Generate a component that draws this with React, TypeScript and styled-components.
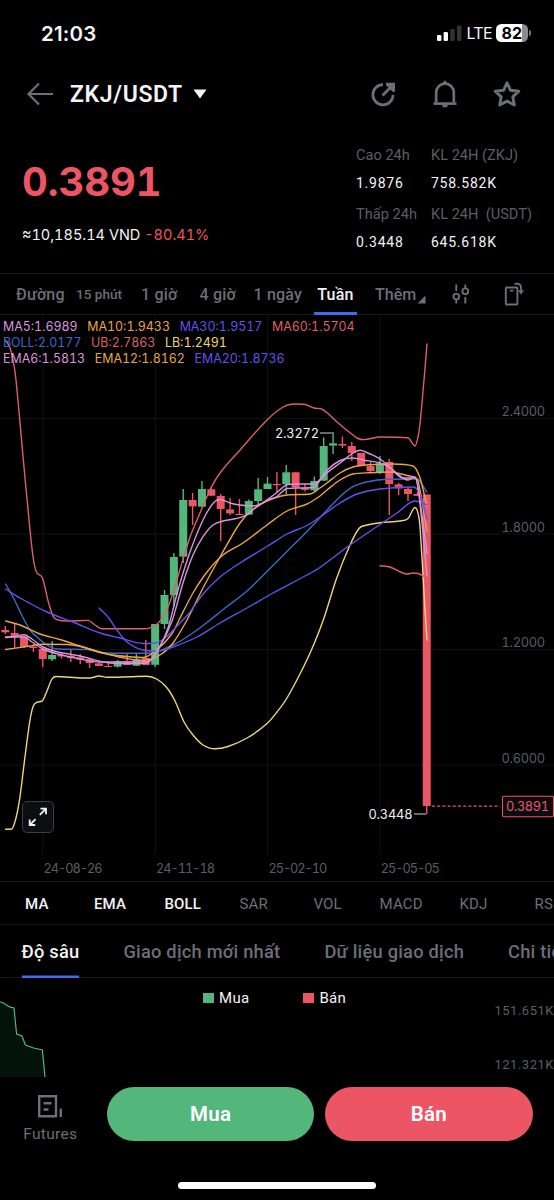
import React from "react";
import styled, { createGlobalStyle } from "styled-components";

const c = {
  muted: "#6c6e78",
  dim: "#5c5d66",
  text: "#f3f3f4",
  red: "#ec5564",
  green: "#53b77c",
  blue: "#3f6bf0",
  line: "#17181b",
  pink: "#d795dd",
  orange: "#e9a445",
  purple: "#6450ea",
  boll: "#3d68c9",
  ub: "#dc5f6b",
  lb: "#edd67a",
};

const inter = `Inter, "Noto Sans", sans-serif`;

const Global = createGlobalStyle`
  * { box-sizing: border-box; }
  body { margin: 0; background: #000; }
`;

const Screen = styled.div`
  width: 554px;
  height: 1200px;
  background: #000;
  color: ${c.text};
  font-family: Roboto, "Noto Sans", sans-serif;
  font-variant-numeric: tabular-nums;
  display: flex;
  flex-direction: column;
  overflow: hidden;
  white-space: pre;
`;

const StatusBar = styled.div`
  height: 66px;
  display: flex;
  align-items: center;
  justify-content: space-between;
  padding: 0 23px 0 41px;
  font-family: ${inter};
  font-variant-numeric: normal;
`;
const Clock = styled.span`
  font-size: 20.5px;
  font-weight: 600;
  letter-spacing: 0.2px;
`;
const StatusRight = styled.div`
  display: flex;
  align-items: center;
  gap: 5px;
`;
const Lte = styled.span`
  font-size: 16px;
  letter-spacing: -0.7px;
  width: 24px;
`;
const Battery = styled.div`
  width: 32.5px;
  height: 18px;
  border-radius: 5.5px;
  background: linear-gradient(90deg, #fff 82%, #8b8b8b 82%);
  color: #000;
  font-size: 16px;
  font-weight: 700;
  line-height: 18px;
  text-align: center;
`;
const Nub = styled.i`
  width: 2px;
  height: 6px;
  margin-left: -4px;
  border-radius: 0 3px 3px 0;
  background: #777;
`;

const Header = styled.div`
  height: 56px;
  display: flex;
  align-items: center;
  padding: 0 33px 0 26px;
`;
const Pair = styled.h1`
  margin: 0 10px 0 16px;
  font-size: 23px;
  font-weight: 600;
  letter-spacing: 0.65px;
`;
const HeaderIcons = styled.div`
  margin-left: auto;
  display: flex;
  align-items: center;
  gap: 34px;
`;

const Summary = styled.section`
  height: 151px;
  display: flex;
  justify-content: space-between;
  padding: 21px 0 0 22px;
`;
const Price = styled.div`
  margin-top: 11px;
  font: 700 40px/56px ${inter};
  font-variant-numeric: tabular-nums;
  letter-spacing: -0.1px;
  color: ${c.red};
`;
const Fiat = styled.div`
  margin-top: 15px;
  font: 400 14.5px/20px ${inter};
  font-variant-numeric: tabular-nums;
  letter-spacing: 0;
  em {
    font-style: normal;
    color: ${c.red};
  }
`;
const Stats = styled.div`
  width: 198px;
  display: grid;
  grid-template-columns: 75px 1fr;
  grid-template-rows: 26px 33px 26px 33px;
`;
const StatLabel = styled.span`
  font-size: 14.6px;
  line-height: 24px;
  color: ${c.dim};
`;
const StatValue = styled.span`
  font-size: 14px;
  line-height: 28px;
  letter-spacing: 0.75px;
`;

const Intervals = styled.nav`
  height: 42px;
  display: flex;
  align-items: center;
  border-top: 1px solid ${c.line};
  border-bottom: 1px solid ${c.line};
  padding-left: 16px;
  font-weight: 500;
`;
const Interval = styled.span<{ $w: number; $small?: boolean }>`
  flex: none;
  width: ${(p) => p.$w}px;
  font-size: ${(p) => (p.$small ? 13.6 : 16)}px;
  letter-spacing: ${(p) => (p.$small ? 0 : 0.2)}px;
  color: ${c.muted};
`;
const ActiveInterval = styled.span`
  flex: none;
  width: 43px;
  height: 41px;
  line-height: 41px;
  margin-right: 18px;
  text-align: center;
  font-size: 16px;
  letter-spacing: 0.2px;
  box-shadow: inset 0 -3px ${c.blue};
`;
const More = styled.span`
  display: flex;
  align-items: flex-end;
  gap: 1px;
  width: 77px;
  font-size: 16px;
  letter-spacing: 0px;
  color: ${c.muted};
`;

const ChartPanel = styled.section`
  position: relative;
  height: 566px;
`;
const Plot = styled.svg`
  display: block;
`;
const Legend = styled.div`
  position: absolute;
  left: 3px;
  top: 4px;
`;
const LegendRow = styled.div`
  display: flex;
  gap: 9.7px;
  font: 400 12.4px/16px ${inter};
  font-variant-numeric: tabular-nums;
  letter-spacing: 0;
`;
const LegendItem = styled.span<{ $color: string }>`
  color: ${(p) => p.$color};
`;
const Expand = styled.button`
  position: absolute;
  left: 22px;
  top: 486px;
  width: 32px;
  height: 32px;
  padding: 0;
  border: 1px solid #3c3d43;
  border-radius: 5px;
  background: #0d0e11;
  display: grid;
  place-items: center;
`;

const Indicators = styled.nav`
  height: 44px;
  display: flex;
  align-items: center;
  border-top: 1px solid ${c.line};
  border-bottom: 1px solid ${c.line};
  padding: 1px 0 0 25px;
`;
const Indicator = styled.span<{ $w: number; $on?: boolean }>`
  flex: none;
  width: ${(p) => p.$w}px;
  font-size: 15px;
  letter-spacing: 0.15px;
  font-weight: ${(p) => (p.$on ? 500 : 400)};
  color: ${(p) => (p.$on ? c.text : c.muted)};
`;
const Divider = styled.i`
  width: 1px;
  height: 22px;
  margin-right: 22.5px;
  background: #222327;
`;

const Tabs = styled.nav`
  height: 53px;
  display: flex;
  gap: 44px;
  padding-left: 21.5px;
  border-bottom: 1px solid ${c.line};
`;
const Tab = styled.span<{ $on?: boolean }>`
  flex: none;
  height: 53px;
  line-height: 53px;
  font-size: 18.3px;
  font-weight: 500;
  letter-spacing: 0.22px;
  color: ${(p) => (p.$on ? c.text : c.muted)};
  box-shadow: ${(p) => (p.$on ? `inset 0 -2.5px ${c.blue}` : "none")};
`;

const Depth = styled.section`
  height: 99px;
  display: grid;
  grid-template-columns: 200px 1fr 62px;
`;
const DepthLegend = styled.div`
  display: flex;
  gap: 54px;
  padding: 10px 0 0 3px;
`;
const DepthKey = styled.span<{ $color: string }>`
  display: flex;
  align-items: center;
  gap: 5.5px;
  height: 20px;
  font-size: 15px;
  letter-spacing: 0.3px;
  &::before {
    content: "";
    width: 10.5px;
    height: 10.5px;
    background: ${(p) => p.$color};
  }
`;
const DepthScale = styled.div`
  display: flex;
  flex-direction: column;
  gap: 33.5px;
  padding: 23px 0 0 2.5px;
  font-size: 13px;
  line-height: 20px;
  letter-spacing: 0.5px;
  color: ${c.dim};
`;

const Actions = styled.footer`
  height: 84px;
  display: flex;
  padding: 10px 21.5px 0 0;
  gap: 11px;
`;
const Futures = styled.div`
  width: 96px;
  padding: 7px 0 0 4.5px;
  display: flex;
  flex-direction: column;
  align-items: center;
  gap: 7px;
  font-size: 15.5px;
  line-height: 18px;
  letter-spacing: 0.3px;
  color: ${c.muted};
`;
const Trade = styled.button<{ $color: string }>`
  flex: 1;
  height: 54px;
  border: 0;
  border-radius: 27px;
  background: ${(p) => p.$color};
  color: #fff;
  font: 600 20.5px Roboto, "Noto Sans", sans-serif;
  letter-spacing: 0.3px;
`;
const HomeBar = styled.div`
  width: 198px;
  height: 7px;
  margin: 21px auto 0;
  border-radius: 4px;
  background: #fff;
`;

/* open/close edges and wick extents of every weekly candle: [up, bodyTop, bodyBottom, high, low] */
const candles: [number, number, number, number, number][] = [
  [0, 630, 632.3, 626, 634], [0, 633, 636, 624, 648], [0, 636.5, 646.8, 636, 648], [0, 646.6, 648, 644, 652],
  [0, 649, 659, 648, 667], [1, 655, 659.3, 641, 661], [0, 655, 656.4, 652, 658.5], [0, 656, 658, 650, 662],
  [0, 657.3, 659.5, 654, 664], [0, 659.3, 663, 658, 668], [0, 663.4, 666, 663, 666], [0, 666, 667, 661.5, 667],
  [1, 661.2, 666.7, 660, 667.5], [0, 661.5, 665, 654, 665], [1, 659, 665.7, 653, 666], [0, 658, 665, 640, 665],
  [1, 624, 664.8, 624, 667], [1, 595, 624, 590, 629], [1, 557, 595, 553, 607], [1, 500, 556.6, 489, 563],
  [0, 500, 506.3, 493, 525], [1, 489, 506.7, 481, 507], [0, 489.3, 495.7, 487, 496], [0, 496, 509, 494, 541],
  [0, 509.4, 513.4, 498, 515], [0, 514, 515, 499, 515], [1, 501, 514.6, 499.5, 515], [1, 489.3, 501, 478, 505],
  [1, 483.6, 489, 477, 489], [0, 484, 485.2, 472, 492], [1, 472.3, 484.3, 465, 494], [0, 472.3, 487.7, 472, 515],
  [0, 488, 489.8, 484, 491.5], [1, 481, 490.3, 476.5, 491], [1, 446, 480.6, 437.5, 481], [1, 443.3, 445.6, 432, 454],
  [0, 444, 445.6, 436.5, 448], [0, 446, 453, 442, 461], [0, 453, 466, 453, 466], [0, 466, 471, 462, 472],
  [1, 463.3, 472, 456, 474], [0, 462, 484, 459, 515], [0, 484.4, 488.4, 483, 495], [0, 489, 494, 487, 501],
  [0, 494, 495.8, 492, 496], [0, 494.5, 806, 494.5, 814],
];

type Line = { color: string; pts: number[] };
const lines: Line[] = [
  { color: c.ub, pts: [5.5, 340, 10, 348, 13, 360, 16, 380, 24, 467, 30, 530, 33.5, 560, 36.7, 572.5, 42.5, 578, 48.3, 601.7, 53.3, 616.7, 58, 620, 67, 621, 88, 620.4, 95, 625, 101.7, 628.7, 120, 628.8, 143.5, 628.8, 156.7, 624.5, 166.7, 610, 173, 593, 181, 566, 190, 537, 197, 520, 210, 490, 220, 473, 240, 450, 267, 420, 283, 407, 294, 404, 304, 404.3, 314, 408, 321.7, 409, 328, 413.5, 336.7, 421.7, 350, 432.7, 358, 438.5, 364, 439.6, 380, 437, 408, 437.7, 411.5, 442, 415, 446, 418, 437, 420, 424, 424, 380, 427, 344] },
  { color: c.boll, pts: [5.6, 584, 13, 597, 21.7, 615, 30, 630, 36.7, 636.7, 46.7, 645, 58, 649, 86.7, 649.5, 103, 652.7, 133, 653.3, 150, 653, 173, 645, 190, 635, 206.7, 622.7, 226.7, 606.7, 246.7, 591.3, 266.7, 571.7, 286.7, 551.7, 306.7, 531.7, 323.3, 514, 340, 496.7, 353, 486.7, 366.7, 482, 386.7, 479.3, 416.7, 479, 420, 481.5, 426.7, 492] },
  { color: c.lb, pts: [5.6, 829.3, 11.7, 829, 16, 818, 20, 796.7, 25, 756.7, 30, 720, 33.3, 706, 36.7, 702.3, 42, 701.2, 46.7, 691.7, 51.7, 679.5, 56, 676.5, 83, 678, 90, 678, 99, 676, 107, 677.3, 130, 676.7, 146.7, 676.2, 156.7, 679, 166.7, 687.5, 175, 701, 184, 722, 193, 735, 203, 745, 215, 748.8, 228, 746.5, 248, 737.5, 267, 723.5, 277, 712, 287, 698, 303, 668, 314, 644, 324, 618, 336.7, 578, 350, 545, 359, 528.5, 365, 525.5, 380, 522.7, 400, 521, 408, 518.5, 415, 507.5, 419.3, 520, 421.7, 553, 425, 610, 427, 640] },
  { color: c.orange, pts: [5.6, 649.5, 30, 646, 43, 644.3, 67, 644.5, 83, 647, 100, 652, 117, 656.5, 143, 660.5, 160, 655, 173, 643, 187, 620, 203, 588, 220, 557, 240, 523, 253, 509.5, 267, 501, 287, 495, 310, 494, 320, 488, 327, 483, 340, 473, 353, 467, 370, 464.7, 393, 464, 413, 466, 420, 478, 427, 506.5] },
  { color: c.orange, pts: [5.6, 621, 20, 625, 40, 634, 60, 639.5, 80, 646, 100, 652.5, 117, 655.5, 143, 657.5, 160, 647, 173, 632, 180, 618, 193, 593, 207, 572, 223, 555, 243, 543, 267, 525, 287, 511, 307, 504, 320, 496, 327, 490, 340, 480, 353, 474, 370, 472.7, 390, 472, 407, 475.5, 417, 479, 420, 490, 427, 531] },
  { color: c.purple, pts: [99, 608, 108, 617, 117, 630, 127, 642, 143, 650, 158, 651, 173, 647, 197, 637, 220, 623, 247, 608, 273, 593, 307, 575, 320, 567.5, 330, 560, 350, 545, 377, 526.5, 397, 513, 415, 501, 427, 504.8] },
  { color: c.purple, pts: [5.6, 589, 20, 598, 47, 612, 73, 622, 100, 633, 120, 638, 143, 643.5, 155, 643, 165, 638, 180, 623, 190, 612, 203, 594, 220, 577, 240, 563, 267, 546.5, 287, 534, 307, 525.5, 323, 515, 340, 503, 357, 494, 380, 489, 413, 487, 420, 494, 427, 520] },
  { color: c.pink, pts: [5.6, 637.5, 15, 636.5, 24, 634.7, 32, 639, 43, 647, 58, 652, 80, 656, 99, 661, 110, 663, 130, 663.5, 147, 663, 158, 650, 168, 628, 178, 590, 190, 552, 203, 520, 213, 503.5, 220, 499.5, 230, 503, 240, 505, 253, 506, 262, 503, 275, 494, 288, 484.5, 300, 484, 313, 484, 326.7, 473, 340, 463, 353, 453, 360, 450.3, 370, 454, 380, 459, 393, 470, 408, 480, 415, 477, 418, 487, 427, 553.5] },
  { color: c.pink, pts: [5.6, 637, 24, 637, 32, 642, 43, 649, 58, 654, 80, 659, 99, 662, 120, 662, 147, 662, 160, 646, 172, 621, 183, 583, 193, 555, 203, 536.7, 213, 525, 223, 521, 243, 516.7, 256.7, 507, 267, 500.5, 277, 496.5, 287, 488.5, 300, 488, 313, 487.5, 326.7, 470.5, 340, 460.5, 352, 458, 363, 460, 380, 463, 390, 468, 403, 478, 415, 478, 419, 495, 427, 576] },
  { color: c.ub, pts: [380, 565.7, 390, 567, 407, 574, 413, 573, 418, 573.5, 427, 578] },
];

/* Cubic path with averaged slopes, flattened at turning points and limited to avoid overshoot */
function smooth(p: number[]) {
  const n = p.length / 2;
  const x = (i: number) => p[2 * i];
  const y = (i: number) => p[2 * i + 1];
  const d = (i: number) => (y(i + 1) - y(i)) / (x(i + 1) - x(i));
  const m = (i: number) => {
    if (i === 0) return d(0);
    if (i === n - 1) return d(n - 2);
    const a = d(i - 1);
    const b = d(i);
    if (a * b <= 0) return 0;
    const limit = 3 * Math.min(Math.abs(a), Math.abs(b));
    return Math.sign(a) * Math.min(Math.abs((y(i + 1) - y(i - 1)) / (x(i + 1) - x(i - 1))), limit);
  };
  let s = `M${x(0)} ${y(0)}`;
  for (let i = 0; i < n - 1; i++) {
    const h = (x(i + 1) - x(i)) / 3;
    s += `C${x(i) + h} ${y(i) + m(i) * h} ${x(i + 1) - h} ${y(i + 1) - m(i + 1) * h} ${x(i + 1)} ${y(i + 1)}`;
  }
  return s;
}

const rows: [string, string][][] = [
  [["MA5:1.6989", c.pink], ["MA10:1.9433", c.orange], ["MA30:1.9517", c.purple], ["MA60:1.5704", c.ub]],
  [["BOLL:2.0177", c.boll], ["UB:2.7863", c.ub], ["LB:1.2491", c.lb]],
  [["EMA6:1.5813", c.pink], ["EMA12:1.8162", c.orange], ["EMA20:1.8736", c.purple]],
];
const prices: [string, number][] = [["2.4000", 418.5], ["1.8000", 534], ["1.2000", 649.5], ["0.6000", 765]];
const dates: [string, number][] = [["24-08-26", 42.8], ["24-11-18", 155.2], ["25-02-10", 267.6], ["25-05-05", 380]];

function Chart() {
  return (
    <Plot width="554" height="566" viewBox="0 315 554 566" fontFamily='Inter, "Noto Sans", sans-serif' fontSize="12.8">
      <g fontSize="30" fontWeight="600" fill="#040405">
        <text x="247" y="580" textLength="110">MEXC</text>
      </g>
      <g stroke="#121316">
        {prices.map(([t, y]) => <path key={t} d={`M0 ${y}H554`} />)}
        {dates.map(([t, x]) => <path key={t} d={`M${x} 315V854`} />)}
      </g>
      {candles.map(([up, top, bottom, high, low], i) => {
        const x = 5.3 + 9.365 * i;
        return (
          <g key={i} fill={up ? c.green : c.red}>
            <rect x={x - 0.7} y={high} width="1.4" height={low - high} />
            <rect x={x - 4} y={top} width="8" height={bottom - top} />
          </g>
        );
      })}
      <g fill="none" strokeWidth="1.4" strokeLinecap="round">
        {lines.map((l, i) => <path key={i} d={smooth(l.pts)} stroke={l.color} />)}
      </g>
      <g fill="#5b5c64">
        {prices.map(([t, y]) => <text key={t} x="501.5" y={y - 2.5} textLength="43.5">{t}</text>)}
        {dates.map(([t, x]) => <text key={t} x={x + 0.8} y="873" textLength="59">{t}</text>)}
      </g>
      <g fill="#f0f0f0" stroke="none">
        <text x="275" y="438" textLength="44">2.3272</text>
        <text x="368.5" y="819" textLength="44">0.3448</text>
      </g>
      <path d="M320 433H332M414 814H426" stroke="#d0d0d0" strokeWidth="1.1" />
      <path d="M432 806.2H500" stroke={c.red} strokeWidth="1.3" strokeDasharray="3 2.2" />
      <rect x="502.5" y="796.3" width="51" height="20.4" rx="1.5" fill="#0b0c0f" stroke={c.red} strokeWidth="1.1" />
      <text x="506" y="811.3" fill={c.red} textLength="43">0.3891</text>
    </Plot>
  );
}

export default function App() {
  return (
    <Screen>
      <Global />
      <StatusBar>
        <Clock>21:03</Clock>
        <StatusRight>
          <svg width="25" height="16" viewBox="0 0 25 16">
            <rect x="0" y="10" width="4.4" height="6" rx="1.2" fill="#fff" />
            <rect x="6.6" y="7" width="4.4" height="9" rx="1.2" fill="#fff" />
            <rect x="13.3" y="4" width="4.4" height="12" rx="1.2" fill="#333" />
            <rect x="20" y="0.6" width="4.4" height="15.4" rx="1.2" fill="#333" />
          </svg>
          <Lte>LTE</Lte>
          <Battery>82</Battery>
          <Nub />
        </StatusRight>
      </StatusBar>

      <Header>
        <svg width="28" height="24" viewBox="0 0 28 24" fill="none" stroke={c.muted} strokeWidth="2.2">
          <path d="M27 12H2.5M13 1.5L2.5 12L13 22.5" />
        </svg>
        <Pair>ZKJ/USDT</Pair>
        <svg width="14" height="10" viewBox="0 0 14 10"><path d="M0.5 0.5H13.5L7 9.5Z" fill="#f3f3f4" /></svg>
        <HeaderIcons>
          <svg width="28" height="28" viewBox="0 0 28 28" fill="none" stroke={c.muted} strokeWidth="2.8">
            <path d="M14 4.6A10.1 10.1 0 1 0 24.1 15" />
            <path d="M13.5 15.5L23 6" />
            <path d="M17 2.8H26V11.8H23.6L17 5.2Z" fill={c.muted} stroke="none" />
          </svg>
          <svg width="28" height="28" viewBox="0 0 28 28" fill="none" stroke={c.muted} strokeWidth="2.7">
            <path d="M5.2 22.5V12.5A8.8 8.8 0 0 1 22.8 12.5V22.5" />
            <path d="M2.5 23.6H25.5" />
            <path d="M10.5 4L14 0.3L17.5 4ZM11 24.8H17L16 27.2H12Z" fill={c.muted} stroke="none" />
          </svg>
          <svg width="28" height="28" viewBox="0 0 28 28" fill="none" stroke={c.muted} strokeWidth="2.9" strokeLinejoin="round">
            <path d="M14 2.8L17.5 10.3L25.8 11.3L19.8 16.9L21.3 25L14 21.1L6.7 25L8.2 16.9L2.2 11.3L10.5 10.3Z" />
          </svg>
        </HeaderIcons>
      </Header>

      <Summary>
        <div>
          <Price>0.3891</Price>
          <Fiat>≈10,185.14 VND <em>-80.41%</em></Fiat>
        </div>
        <Stats>
          <StatLabel>Cao 24h</StatLabel>
          <StatLabel>KL 24H (ZKJ)</StatLabel>
          <StatValue>1.9876</StatValue>
          <StatValue>758.582K</StatValue>
          <StatLabel>Thấp 24h</StatLabel>
          <StatLabel>KL 24H  (USDT)</StatLabel>
          <StatValue>0.3448</StatValue>
          <StatValue>645.618K</StatValue>
        </Stats>
      </Summary>

      <Intervals>
        <Interval $w={60}>Đường</Interval>
        <Interval $w={65} $small>15 phút</Interval>
        <Interval $w={58.5}>1 giờ</Interval>
        <Interval $w={54}>4 giờ</Interval>
        <Interval $w={60.5}>1 ngày</Interval>
        <ActiveInterval>Tuần</ActiveInterval>
        <More>
          Thêm
          <svg width="9" height="9" viewBox="0 0 9 9"><path d="M8.5 0.5V8.5H0.5Z" fill={c.muted} /></svg>
        </More>
        <svg width="18" height="22" viewBox="0 0 18 22" fill="none" stroke={c.muted} strokeWidth="1.9">
          <circle cx="4.3" cy="13.5" r="2.9" />
          <path d="M4.3 1.5V8M4.3 16.5V20.5" />
          <circle cx="13.3" cy="8.3" r="2.9" />
          <path d="M13.3 1.5V5.5M13.3 14V20.5" />
        </svg>
        <svg width="20" height="24" viewBox="0 0 20 24" fill="none" stroke={c.muted} strokeWidth="1.9" style={{ marginLeft: 34 }}>
          <rect x="1.8" y="5.5" width="11.6" height="17" rx="1" />
          <path d="M6 8.6H9.5M10.5 1.8H13.5Q17 2 17 6V9.5" />
          <path d="M13.8 8.3H20L17 12.6Z" fill={c.muted} stroke="none" />
        </svg>
      </Intervals>

      <ChartPanel>
        <Chart />
        <Legend>
          {rows.map((r, i) => (
            <LegendRow key={i}>
              {r.map(([t, color]) => <LegendItem key={t} $color={color}>{t}</LegendItem>)}
            </LegendRow>
          ))}
        </Legend>
        <Expand>
          <svg width="22" height="22" viewBox="0 0 22 22" fill="none" stroke="#f3f3f4" strokeWidth="1.8">
            <path d="M13.5 2.7H19V8.2M19 2.7L12.8 8.9M2.7 13.5V19H8.2M2.7 19L8.6 13.1" />
          </svg>
        </Expand>
      </ChartPanel>

      <Indicators>
        <Indicator $w={69} $on>MA</Indicator>
        <Indicator $w={70.5} $on>EMA</Indicator>
        <Indicator $w={75} $on>BOLL</Indicator>
        <Indicator $w={51.5}>SAR</Indicator>
        <Divider />
        <Indicator $w={66}>VOL</Indicator>
        <Indicator $w={80}>MACD</Indicator>
        <Indicator $w={75}>KDJ</Indicator>
        <Indicator $w={30}>RS</Indicator>
      </Indicators>

      <Tabs>
        <Tab $on>Độ sâu</Tab>
        <Tab>Giao dịch mới nhất</Tab>
        <Tab>Dữ liệu giao dịch</Tab>
        <Tab>Chi tiết</Tab>
      </Tabs>

      <Depth>
        <svg width="60" height="99" viewBox="0 978 60 99">
          <path d="M0 1002L3.5 1003L9 1006.7L14 1008L16.6 1034L22 1036L25.4 1045L33.6 1048L42.4 1050L45 1077H0Z" fill="#03120b" />
          <path d="M0 1002L3.5 1003L9 1006.7L14 1008L16.6 1034L22 1036L25.4 1045L33.6 1048L42.4 1050L45 1077" fill="none" stroke={c.green} strokeWidth="1.2" />
        </svg>
        <DepthLegend>
          <DepthKey $color={c.green}>Mua</DepthKey>
          <DepthKey $color={c.red}>Bán</DepthKey>
        </DepthLegend>
        <DepthScale>
          <span>151.651K</span>
          <span>121.321K</span>
        </DepthScale>
      </Depth>

      <Actions>
        <Futures>
          <svg width="28" height="24" viewBox="0 0 28 24" fill="none" stroke={c.muted} strokeWidth="2.4">
            <path d="M21 22.3H3.2V2.2H20V22.3M24.8 14.5V23M7.5 9.3H15.5M7.5 15.5H12.5" />
          </svg>
          Futures
        </Futures>
        <Trade $color={c.green}>Mua</Trade>
        <Trade $color={c.red}>Bán</Trade>
      </Actions>
      <HomeBar />
    </Screen>
  );
}
